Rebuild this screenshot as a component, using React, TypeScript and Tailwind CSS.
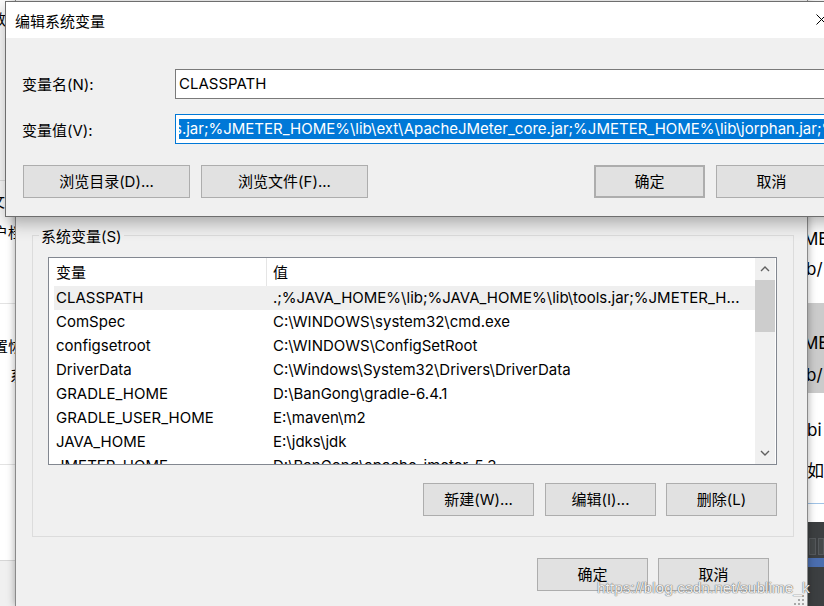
import React from 'react';

const rows: [string, string][] = [
  ['CLASSPATH', '.;%JAVA_HOME%\\lib;%JAVA_HOME%\\lib\\tools.jar;%JMETER_H...'],
  ['ComSpec', 'C:\\WINDOWS\\system32\\cmd.exe'],
  ['configsetroot', 'C:\\WINDOWS\\ConfigSetRoot'],
  ['DriverData', 'C:\\Windows\\System32\\Drivers\\DriverData'],
  ['GRADLE_HOME', 'D:\\BanGong\\gradle-6.4.1'],
  ['GRADLE_USER_HOME', 'E:\\maven\\m2'],
  ['JAVA_HOME', 'E:\\jdks\\jdk'],
  ['JMETER_HOME', 'D:\\BanGong\\apache-jmeter-5.3'],
];

const Btn = ({ children, className = '' }: { children: React.ReactNode; className?: string }) => (
  <div
    className={`flex items-center justify-center h-[33px] pt-[1px] bg-[#e1e1e1] border border-[#adadad] text-[15px] leading-[20px] text-black ${className}`}
  >
    {children}
  </div>
);

const Chevron = ({ up }: { up?: boolean }) => (
  <svg width="10" height="6" viewBox="0 0 10 6">
    <path
      d={up ? 'M1 5L5 1L9 5' : 'M1 1L5 5L9 1'}
      fill="none"
      stroke="#606060"
      strokeWidth="1.4"
    />
  </svg>
);

const LeftPage = () => (
  <div className="w-[15px] h-full shrink-0 bg-white overflow-hidden flex flex-col text-[15px] leading-[20px] text-black whitespace-nowrap">
    <div className="h-[10px]" />
    <div className="h-[20px] ml-[-9px]">数</div>
    <div className="h-[150px]" />
    <div className="h-px bg-[#e3e3e3]" />
    <div className="h-[11px]" />
    <div className="h-[20px] ml-[-10px]">文</div>
    <div className="h-[11px]" />
    <div className="h-[20px] ml-[-7px]">户档</div>
    <div className="h-[60px]" />
    <div className="h-px bg-[#e3e3e3]" />
    <div className="h-[33px]" />
    <div className="h-[20px] ml-[-7px]">置恢</div>
    <div className="h-[9px]" />
    <div className="h-[20px] ml-[10px]">系</div>
    <div className="h-[78px]" />
    <div className="h-px bg-[#e3e3e3]" />
    <div className="h-[95px]" />
    <div className="h-px bg-[#d6d6d6]" />
    <div className="flex-1 bg-[#f0f0f0]" />
  </div>
);

const RightPage = () => (
  <div className="w-[16px] h-full shrink-0 bg-white overflow-hidden flex flex-col text-[17px] leading-[22px] text-black whitespace-nowrap">
    <div className="h-[228px]" />
    <div className="h-[22px] ml-[-5px]">ME</div>
    <div className="h-[8px]" />
    <div className="h-[22px] ml-[-2px]">b/</div>
    <div className="h-[23px]" />
    <div className="h-[90px] bg-[#cbcbcb] flex flex-col">
      <div className="h-[29px]" />
      <div className="h-[22px] ml-[-5px]">ME</div>
      <div className="h-[10px]" />
      <div className="h-[22px] ml-[-2px]">b/</div>
    </div>
    <div className="h-[26px]" />
    <div className="h-[22px] ml-[-1px]">bi</div>
    <div className="h-[19px]" />
    <div className="h-[22px] ml-[-1px]">如</div>
    <div className="h-[21px]" />
    <div className="h-px bg-[#9fc3e7]" />
    <div className="h-[18px]" />
    <div className="flex-1 bg-[#3c3f41] flex flex-col">
      <div className="h-[16px]" />
      <div className="h-[18px] flex gap-[2px] pl-[1px]">
        <div className="w-[7px] h-[17px] border border-[#55595c] bg-[#45494a]" />
        <div className="w-[7px] h-[17px] border border-[#55595c] bg-[#45494a]" />
      </div>
      <div className="h-[2px]" />
      <div className="h-[9px] bg-[#4b6eaf]" />
    </div>
  </div>
);

const VarList = () => (
  <div className="w-[729px] h-[208px] border border-[#828790] bg-white flex">
    <div className="w-[706px] overflow-hidden">
      <div className="h-[28px] flex text-[15px] leading-[20px]">
        <div className="w-[218px] pl-[7px] pt-[1px] border-r border-[#e5e5e5] flex items-center">变量</div>
        <div className="pl-[6px] pt-[1px] flex items-center">值</div>
      </div>
      {rows.map(([k, v], i) => (
        <div
          key={k}
          className={`ml-[5px] w-[701px] h-[24px] flex items-center text-[15px] leading-[20px] whitespace-nowrap ${
            i === 0 ? 'bg-[#efefef]' : ''
          }`}
        >
          <div className="w-[219px] pl-[2px] shrink-0">{k}</div>
          <div className="flex-1 overflow-hidden">{v}</div>
        </div>
      ))}
    </div>
    <div className="w-[20px] bg-[#f0f0f0] flex flex-col">
      <div className="h-[22px] flex items-center justify-center">
        <Chevron up />
      </div>
      <div className="h-[52px] bg-[#cdcdcd]" />
      <div className="flex-1" />
      <div className="h-[22px] flex items-center justify-center">
        <Chevron />
      </div>
    </div>
  </div>
);

const BackDialog = () => (
  <div className="relative z-10 w-[793px] h-full shrink-0 bg-[#f0f0f0] border-x border-[#8a8a8a] flex flex-col shadow-[0_0_8px_rgba(0,0,0,0.35)]">
    <div className="h-[223px]" />
    <fieldset className="ml-[16px] mr-[13px] border border-[#dcdcdc] pl-[6px] pb-[20px] text-black">
      <legend className="px-[2px] pt-[4px] text-[15px] leading-[20px]">系统变量(S)</legend>
      <div className="ml-[9px] mt-[10px]">
        <VarList />
        <div className="w-[729px] mt-[18px] flex justify-end">
          <Btn className="w-[111px]">新建(W)...</Btn>
          <Btn className="w-[111px] ml-[11px]">编辑(I)...</Btn>
          <Btn className="w-[111px] ml-[10px]">删除(L)</Btn>
        </div>
      </div>
    </fieldset>
    <div className="mt-[21px] mr-[38px] flex justify-end">
      <Btn className="w-[111px]">确定</Btn>
      <Btn className="w-[111px] ml-[10px]">取消</Btn>
    </div>
    <svg className="absolute right-[2px] bottom-0" width="12" height="12" viewBox="0 0 12 12">
      {[
        [9, 1],
        [9, 5],
        [5, 5],
        [9, 9],
        [5, 9],
        [1, 9],
      ].map(([x, y]) => (
        <rect key={`${x}-${y}`} x={x} y={y} width="2" height="2" fill="#a8a8a8" />
      ))}
    </svg>
  </div>
);

const FrontDialog = () => (
  <div className="absolute z-20 left-[5px] top-[1px] w-[840px] border border-[#6e6e6e] bg-[#f0f0f0] text-black shadow-[0_6px_16px_rgba(0,0,0,0.3)]">
    <div className="relative h-[36px] bg-white flex items-center pl-[9px] pt-[3px] text-[15px] leading-[20px]">
      编辑系统变量
      <svg className="absolute left-[810px] top-[12px]" width="11" height="11" viewBox="0 0 11 11">
        <path d="M0.5 0.5L10.5 10.5M10.5 0.5L0.5 10.5" stroke="#000" strokeWidth="1" fill="none" />
      </svg>
    </div>
    <div className="pt-[31px] pb-[18px] pl-[16px] text-[15px] leading-[20px]">
      <div className="flex items-center h-[30px]">
        <div className="w-[153px] pt-[2px]">变量名(N):</div>
        <div className="flex-1 h-[30px] border border-[#7a7a7a] bg-white pl-[3px] flex items-center">
          CLASSPATH
        </div>
      </div>
      <div className="flex items-center h-[30px] mt-[15px]">
        <div className="w-[153px] pt-[3px]">变量值(V):</div>
        <div className="flex-1 h-[30px] border border-[#0078d7] bg-white pl-[3px] flex items-center overflow-hidden">
          <div className="overflow-hidden whitespace-nowrap">
            <span className="ml-[-5px] inline-block bg-[#0078d7] text-white">
              s.jar;%JMETER_HOME%\lib\ext\ApacheJMeter_core.jar;%JMETER_HOME%\lib\jorphan.jar;%JMETER_HOME%\lib\logkit-2.0.jar;
            </span>
          </div>
        </div>
      </div>
      <div className="flex mt-[21px]">
        <Btn className="w-[167px] ml-[1px]">浏览目录(D)...</Btn>
        <Btn className="w-[167px] ml-[11px]">浏览文件(F)...</Btn>
        <Btn className="w-[111px] ml-[226px] border-2 border-[#0078d7]">确定</Btn>
        <Btn className="w-[111px] ml-[11px]">取消</Btn>
      </div>
    </div>
  </div>
);

export default function App() {
  return (
    <div className="relative w-[824px] h-[606px] overflow-hidden bg-white font-['Inter','Noto_Sans_CJK_SC',sans-serif]">
      <div className="flex h-full">
        <LeftPage />
        <BackDialog />
        <RightPage />
      </div>
      <FrontDialog />
      <div className="absolute z-30 left-[597px] top-[578px] text-[15.5px] leading-[20px] font-['Liberation_Sans',sans-serif] text-white/90 [text-shadow:0_0_1px_#555,0_0_1px_#555]">
        https://blog.csdn.net/sublime_k
      </div>
    </div>
  );
}
